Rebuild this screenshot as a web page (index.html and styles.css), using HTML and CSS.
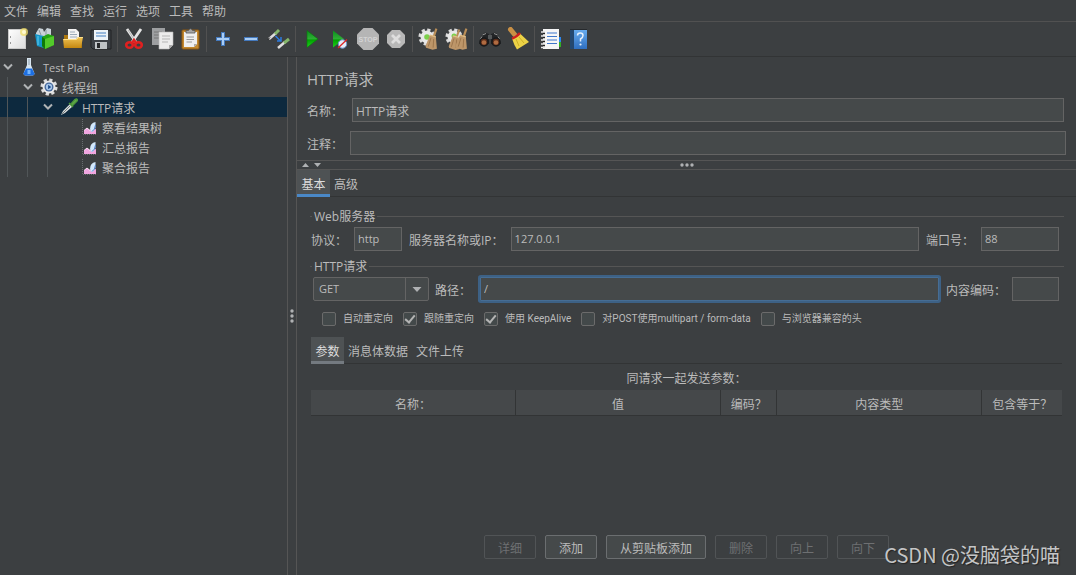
FILE: index.html
```html
<!DOCTYPE html>
<html lang="zh-CN">
<head>
<meta charset="utf-8">
<title>HTTP请求</title>
<link rel="stylesheet" href="styles.css">
</head>
<body>
<svg class="defs" aria-hidden="true">
  <defs>
    <linearGradient id="gGreen" x1="0" y1="0" x2="0" y2="1"><stop offset="0" stop-color="#0a8f1c"/><stop offset=".5" stop-color="#2fae35"/><stop offset=".55" stop-color="#00a000"/><stop offset="1" stop-color="#1fd11f"/></linearGradient>
    <linearGradient id="gGold" x1="0" y1="0" x2="0" y2="1"><stop offset="0" stop-color="#f0c456"/><stop offset="1" stop-color="#c48710"/></linearGradient>
    <linearGradient id="gPaper" x1="0" y1="0" x2="1" y2="1"><stop offset="0" stop-color="#ffffff"/><stop offset="1" stop-color="#dcdcdc"/></linearGradient>
    <linearGradient id="gBlue" x1="0" y1="0" x2="0" y2="1"><stop offset="0" stop-color="#6aaef0"/><stop offset="1" stop-color="#2f6fc0"/></linearGradient>
    <symbol id="gear" viewBox="0 0 20 20">
      <circle cx="10" cy="10" r="8" fill="none" stroke="#dcdcdc" stroke-width="3" stroke-dasharray="3.600 2.683"/>
      <circle cx="10" cy="10" r="7.200" fill="#e8e8e8"/>
    </symbol>
    <symbol id="broom" viewBox="0 0 12 20">
      <path d="M10.500 0.500L8 8" stroke="#b98e58" stroke-width="2"/>
      <path d="M4.500 6.500L10 8L11 19L7 20L1 18Q0 17 1 15Z" fill="#bd9669"/>
      <path d="M5.500 9L3 17M8 10L7.500 18" stroke="#936c44" stroke-width=".7"/>
      <path d="M4.500 6.500L10 8" stroke="#e0bd86" stroke-width="1.200"/>
    </symbol>
    <symbol id="chart" viewBox="0 0 16 16">
      <path d="M1.500 0V15.500H16" fill="none" stroke="#696d70" stroke-dasharray="1 1"/>
      <path d="M3 15V11.500L6 9L9 11L15 10V15Z" fill="#f0a6e0"/>
      <path d="M3 11.500L6 9L9 11.500" fill="none" stroke="#fbe3f7"/>
      <path d="M9 10Q9 4 14.500 3V9Q13 13 10 13Z" fill="#d3e8fb"/>
      <path d="M11 12.500Q14 11 14.500 6" fill="none" stroke="#4b7fd0"/>
    </symbol>
    <symbol id="chevron" viewBox="0 0 12 8"><path d="M2 1.500L6 5.500L10 1.500" fill="none" stroke="#b0b3b5" stroke-width="2"/></symbol>
  </defs>
</svg>

<div class="app">
  <nav class="menubar" aria-label="菜单">
    <button>文件</button><button>编辑</button><button>查找</button><button>运行</button><button>选项</button><button>工具</button><button>帮助</button>
  </nav>

  <div class="toolbar" role="toolbar">
    <button aria-label="新建"><svg viewBox="0 0 24 24"><rect x="3.500" y="2.500" width="17" height="19" fill="url(#gPaper)" stroke="#c9c9c9"/><path d="M5 10h1M5 16h1" stroke="#999" stroke-width="2"/><circle cx="19" cy="5" r="4" fill="#f2df6a" opacity=".75"/><circle cx="19" cy="5" r="2" fill="#fffad2"/></svg></button>
    <button aria-label="模板"><svg viewBox="0 0 24 24"><path d="M3 6L6 1L10 2L11 5L14 1L18 2V9L3 11Z" fill="#c9d2d8"/><path d="M6 3L8 8M13 3V9" stroke="#87959e"/><path d="M2 7L11 9V21L4 19Z" fill="#1596c9"/><path d="M5 9V18" stroke="#69cdf0"/><path d="M9 10L15 7L21 9V18L12 22L9 19Z" fill="#23a512"/><path d="M12 12L21 9V18L12 22Z" fill="#53ca2b"/><path d="M9 10L12 12V22L9 19Z" fill="#0e7a08"/></svg></button>
    <button aria-label="打开"><svg viewBox="0 0 24 24"><path d="M3 8H9L11 10H21V21H3Z" fill="#ad780f"/><path d="M7 2H15L18 5V14H7Z" fill="#f3f3f3"/><path d="M9 5H14M9 7.500H16M9 10H16" stroke="#9dabb8"/><path d="M2 12H15L17 10H22L20 21H3Z" fill="url(#gGold)"/><path d="M2.500 12.500H15.500L17.500 10.500H22" fill="none" stroke="#ffe08a"/></svg></button>
    <button aria-label="保存"><svg viewBox="0 0 24 24"><path d="M2 3H22V22H4L2 20Z" fill="#3c4045" stroke="#202225"/><rect x="5" y="3" width="14" height="10" fill="#edf3f8"/><path d="M7 6H17M7 9H17" stroke="#7ba5d2" stroke-width="1.500"/><rect x="6" y="15" width="12" height="7" fill="#bfc3c6"/><rect x="8" y="16" width="3" height="5" fill="#26282a"/></svg></button>
    <span class="sep"></span>
    <button aria-label="剪切"><svg viewBox="0 0 24 24"><path d="M5 2L14.500 16M19 2L9.500 16" stroke="#e4e4e4" stroke-width="2.800"/><path d="M6 3L13 14" stroke="#aaa" stroke-width=".8"/><g fill="none" stroke="#df2020" stroke-width="2.600"><ellipse cx="7.500" cy="18" rx="3.300" ry="2.800"/><ellipse cx="16.500" cy="18" rx="3.300" ry="2.800"/><path d="M10 16L12 13L14 16"/></g></svg></button>
    <button aria-label="复制"><svg viewBox="0 0 24 24"><path d="M2 1H15V18H2Z" fill="#9d9fa1"/><path d="M4 5H12M4 8H12M4 11H10" stroke="#777"/><path d="M9 5H23V18L19 22H9Z" fill="#ececec" stroke="#bbb" stroke-width=".6"/><path d="M12 9H20M12 12H20M12 15H18" stroke="#b5b5b5"/><path d="M23 18H19V22Z" fill="#aaa"/></svg></button>
    <button aria-label="粘贴"><svg viewBox="0 0 24 24"><rect x="4" y="3" width="17" height="19" rx="1" fill="#c4892f" stroke="#8c5913"/><path d="M6 5H19V17L16 20H6Z" fill="#efefef"/><path d="M8.500 10H16M8.500 12.500H16M8.500 15H14" stroke="#999"/><path d="M8 6V3.500H10.500Q12.500 0 14.500 3.500H17V6Z" fill="#a6a6a6" stroke="#555" stroke-width=".8"/><path d="M19 17H16V20Z" fill="#aaa"/></svg></button>
    <span class="sep"></span>
    <button aria-label="展开"><svg viewBox="0 0 24 24"><path d="M12 5V19M5 12H19" stroke="#4479bd" stroke-width="4"/><path d="M12 6V18M6 12H18" stroke="#a9cdf5" stroke-width="2"/></svg></button>
    <button aria-label="折叠"><svg viewBox="0 0 24 24"><path d="M5 12H19" stroke="#4479bd" stroke-width="4"/><path d="M6 12H18" stroke="#a9cdf5" stroke-width="2"/></svg></button>
    <button aria-label="切换"><svg viewBox="0 0 24 24"><path d="M2 12L9 6" stroke="#dedede" stroke-width="2.500"/><path d="M8 7L12 3" stroke="#84b66b" stroke-width="3"/><path d="M1 12.500L3 10.500" stroke="#222" stroke-width="1"/><path d="M11 21L18 15" stroke="#dedede" stroke-width="2.500"/><path d="M17 16L22 12" stroke="#84b66b" stroke-width="3"/><path d="M8.500 9L13 13.500M14 10V14H10" fill="none" stroke="#2c7be0" stroke-width="1.500"/></svg></button>
    <span class="sep"></span>
    <button aria-label="启动"><svg viewBox="0 0 24 24"><path d="M7 3.500L18 12L7 20.500Z" fill="url(#gGreen)" stroke="#067806" stroke-width=".6"/></svg></button>
    <button aria-label="不停顿开始"><svg viewBox="0 0 24 24"><path d="M5 3.500L16 12L5 20.500Z" fill="url(#gGreen)"/><circle cx="14.500" cy="17" r="4.200" fill="#e5edf8" stroke="#7095cc"/><path d="M10 21L19 12.500" stroke="#dd2525" stroke-width="1.300"/></svg></button>
    <button aria-label="停止" disabled><svg viewBox="0 0 24 24"><path d="M7.500 1H16.500L23 7.500V16.500L16.500 23H7.500L1 16.500V7.500Z" fill="#b5b5b5"/><text x="12" y="15" text-anchor="middle" class="stop-word">STOP</text></svg></button>
    <button aria-label="关闭" disabled><svg viewBox="0 0 24 24"><path d="M8 3H16L21 8V16L16 21H8L3 16V8Z" fill="#b8b8b8"/><path d="M8 8L16 16M16 8L8 16" stroke="#dedede" stroke-width="2.800"/></svg></button>
    <span class="sep"></span>
    <button aria-label="清除"><svg viewBox="0 0 24 24"><use href="#gear" x="1" y="1" width="18" height="18"/><circle cx="10" cy="10" r="2.800" fill="#7cd04c"/><use href="#broom" x="8" y="1" width="13" height="22"/></svg></button>
    <button aria-label="清除全部"><svg viewBox="0 0 24 24"><use href="#gear" x="0" y="1" width="18" height="18"/><circle cx="9" cy="9" r="2.500" fill="#7cd04c"/><use href="#broom" x="3" y="2" width="13" height="21"/><use href="#broom" x="10" y="1" width="13" height="22"/></svg></button>
    <span class="sep"></span>
    <button aria-label="查找"><svg viewBox="0 0 24 24"><path d="M4 8L7 5.500L11 7L11 17H1Z" fill="#222426"/><path d="M13 7L17 5.500L20 8L23 17H13Z" fill="#222426"/><path d="M4.500 8L8 6.500M16 6.500L19.500 8M2.500 12L4 9.500M20 9.500L21.500 12" stroke="#999"/><path d="M10 8H14V12H10Z" fill="#55585a"/><circle cx="6" cy="15" r="4" fill="#5c2e1b" stroke="#17191b" stroke-width="1.500"/><circle cx="18" cy="15" r="4" fill="#5c2e1b" stroke="#17191b" stroke-width="1.500"/><circle cx="6" cy="15.500" r="2.300" fill="#b06c42"/><circle cx="18" cy="15.500" r="2.300" fill="#b06c42"/></svg></button>
    <button aria-label="重置查找"><svg viewBox="0 0 24 24"><path d="M4.500 2.500L9 8" stroke="#c99045" stroke-width="5" stroke-linecap="round"/><path d="M6 11.500L14 6.500L23 15L11 22.500Q8 18 6 11.500Z" fill="#ecd246"/><path d="M10 12L13 19M13 10L18 16" stroke="#c4a41d" stroke-width=".8"/><path d="M6 11.500Q10 10.500 14 6" fill="none" stroke="#cc2020" stroke-width="2.600"/></svg></button>
    <span class="sep"></span>
    <button aria-label="函数助手"><svg viewBox="0 0 24 24"><rect x="19" y="10" width="3" height="5" fill="#2c87ef"/><rect x="19" y="15" width="3" height="5" fill="#33ae25"/><rect x="4" y="2" width="16" height="20" fill="#f6f6f6"/><path d="M8 6H18M8 9.500H18M8 13H18M8 16.500H18" stroke="#3f77cb" stroke-width="1.200"/><path d="M2 5H6M2 9H6M2 13H6M2 17H6M2 20.500H6" stroke="#e5e5e5" stroke-width="1.500"/><path d="M4 6.500H6M4 10.500H6M4 14.500H6M4 18.500H6" stroke="#222" stroke-width="1.300"/></svg></button>
    <button aria-label="帮助"><svg viewBox="0 0 24 24"><rect x="3" y="2" width="17" height="20" fill="url(#gBlue)"/><path d="M3 2H7V22H3Z" fill="#244870"/><path d="M3 2.500H20" stroke="#272a2d"/><path d="M10.500 8.500Q10.500 6 13.300 6Q16 6 16 8.500Q16 10.500 13.500 12V14.500" fill="none" stroke="#e6f0fb" stroke-width="1.500"/><circle cx="13.500" cy="17.500" r="1.100" fill="#e6f0fb"/></svg></button>
  </div>

  <div class="body">
    <aside class="tree" role="tree">
      <div class="node" role="treeitem"><span class="twist"><svg><use href="#chevron"/></svg></span><span class="pic"><svg viewBox="0 0 18 18"><path d="M7 0H11V7L14.500 15.500Q14.500 17.500 12.500 17.500H5.500Q3.500 17.500 3.500 15.500L7 7Z" fill="#d9e6f0"/><path d="M9 1V7" stroke="#8ea0ae"/><path d="M6 10.500H12L14.500 15.500Q14.500 17.500 12.500 17.500H5.500Q3.500 17.500 3.500 15.500Z" fill="#1d6fe2"/><path d="M9 12V16" stroke="#73b6ff" stroke-width="3"/></svg></span><span class="name latin">Test Plan</span></div>
      <div class="node" role="treeitem"><i class="guide"></i><span class="twist"><svg><use href="#chevron"/></svg></span><span class="pic"><svg viewBox="0 0 20 20"><use href="#gear" width="20" height="20"/><circle cx="10" cy="10" r="5" fill="#46699c"/><circle cx="10" cy="10" r="3.500" fill="#a9c8ea"/><path d="M9 7.500L12.500 10L9 12.500Z" fill="#1d4a8a"/></svg></span><span class="name">线程组</span></div>
      <div class="node selected" role="treeitem" aria-selected="true"><i class="guide"></i><i class="guide"></i><span class="twist"><svg><use href="#chevron"/></svg></span><span class="pic"><svg viewBox="0 0 18 18"><path d="M1 17L3 13L10 6L12.500 8.500L5 15Z" fill="#dadddc"/><path d="M2 16L10 8" stroke="#737c7e"/><path d="M9 5L13 9M11 6L15 1.500Q17 0 17.500 2.500L12 8Z" fill="#68b14e" stroke="#4c963a" stroke-width="1.500"/></svg></span><span class="name">HTTP请求</span></div>
      <div class="node" role="treeitem"><i class="guide"></i><i class="guide"></i><i class="guide"></i><span class="twist"></span><span class="pic leaf"><svg><use href="#chart"/></svg></span><span class="name">察看结果树</span></div>
      <div class="node" role="treeitem"><i class="guide"></i><i class="guide"></i><i class="guide"></i><span class="twist"></span><span class="pic leaf"><svg><use href="#chart"/></svg></span><span class="name">汇总报告</span></div>
      <div class="node" role="treeitem"><i class="guide"></i><i class="guide"></i><i class="guide"></i><span class="twist"></span><span class="pic leaf"><svg><use href="#chart"/></svg></span><span class="name">聚合报告</span></div>
    </aside>
    <div class="split-v"><svg class="grip-v" viewBox="0 0 4 14" fill="#afb1b3"><circle cx="2" cy="2" r="1.700"/><circle cx="2" cy="7" r="1.700"/><circle cx="2" cy="12" r="1.700"/></svg></div>

    <main class="panel">
      <section class="head">
        <h1>HTTP请求</h1>
        <div class="line name-line"><label for="nm">名称：</label><input id="nm" value="HTTP请求"></div>
        <div class="line note-line"><label for="cm">注释：</label><input id="cm"></div>
      </section>
      <div class="split-h">
        <svg class="arrows" viewBox="0 0 20 6" fill="#afb1b3"><path d="M0 5L3.500 1L7 5ZM12 1H19L15.500 5Z"/></svg>
        <svg class="grip-h" viewBox="0 0 14 4" fill="#afb1b3"><circle cx="2" cy="2" r="1.700"/><circle cx="7" cy="2" r="1.700"/><circle cx="12" cy="2" r="1.700"/></svg>
      </div>
      <div class="tabs" role="tablist"><button class="on" role="tab" aria-selected="true">基本</button><button role="tab">高级</button></div>

      <div class="content">
        <fieldset>
          <legend>Web服务器</legend>
          <div class="row">
            <label for="proto">协议：</label><input id="proto" class="w-proto latin" value="http">
            <label for="host">服务器名称或IP：</label><input id="host" class="grow latin" value="127.0.0.1">
            <label for="port">端口号：</label><input id="port" class="w-port latin" value="88">
          </div>
        </fieldset>
        <fieldset>
          <legend>HTTP请求</legend>
          <div class="row request">
            <span class="combo"><select class="latin" aria-label="方法"><option>GET</option><option>POST</option></select><svg viewBox="0 0 24 24"><path d="M.5 0V24" stroke="#646464"/><path d="M7.500 10H16.500L12 15Z" fill="#afb1b3"/></svg></span>
            <label for="path">路径：</label><input id="path" class="grow focused latin" value="/">
            <label for="enc">内容编码：</label><input id="enc" class="w-enc">
          </div>
          <div class="checks">
            <label><input type="checkbox">自动重定向</label>
            <label><input type="checkbox" checked>跟随重定向</label>
            <label><input type="checkbox" checked>使用 KeepAlive</label>
            <label><input type="checkbox">对POST使用multipart / form-data</label>
            <label><input type="checkbox">与浏览器兼容的头</label>
          </div>
        </fieldset>

        <div class="params">
          <div class="tabs inner" role="tablist"><button class="on" role="tab" aria-selected="true">参数</button><button role="tab">消息体数据</button><button role="tab">文件上传</button></div>
          <table>
            <caption>同请求一起发送参数：</caption>
            <thead><tr><th class="c-wide">名称：</th><th class="c-wide">值</th><th class="c-code">编码？</th><th class="c-wide">内容类型</th><th>包含等于？</th></tr></thead>
          </table>
        </div>
      </div>

      <div class="actions">
        <button disabled>详细</button><button>添加</button><button>从剪贴板添加</button><button disabled>删除</button><button disabled>向上</button><button disabled>向下</button>
      </div>
    </main>
  </div>
  <div class="watermark">CSDN @没脑袋的喵</div>
</div>
</body>
</html>
```

FILE: styles.css
```css
* { box-sizing: border-box; }

body {
  margin: 0;
  background: #3c3f41;
  color: #bbbbbb;
  font: 12px/20px "Open Sans", "Noto Sans CJK SC", sans-serif;
}

button, input, select { font: inherit; color: inherit; }
button { background: none; border: 0; padding: 0; }
.latin { font-size: 11px; }
.defs { position: absolute; width: 0; height: 0; }

.app {
  position: relative;
  display: flex;
  flex-direction: column;
  min-height: 100vh;
}

.menubar {
  display: flex;
  gap: 9px;
  padding: 3px 4px 0;
  line-height: 18px;
  border-bottom: 1px solid #515151;
}

.toolbar {
  display: flex;
  align-items: center;
  padding: 3px;
  border-bottom: 1px solid #323435;
}
.toolbar button { display: flex; justify-content: center; width: 28px; height: 28px; align-items: center; }
.toolbar svg { width: 24px; height: 24px; }
.sep { width: 1px; height: 26px; margin: 0 2px; background: #515151; }
.stop-word { font-family: "Liberation Sans", sans-serif; font-size: 7px; font-weight: bold; fill: #d4d4d4; }

.body { flex: 1; display: flex; }

.tree { width: 287px; flex: none; }
.node { display: flex; align-items: center; height: 20px; white-space: nowrap; }
.selected { background: #0d293e; }
.guide { width: 13px; height: 20px; margin-left: 7px; border-left: 1px solid #515658; }
.twist { width: 20px; display: flex; padding-left: 2px; }
.twist svg { width: 12px; height: 8px; }
.pic { width: 18px; display: flex; justify-content: center; }
.pic svg { width: 18px; height: 18px; }
.leaf svg { width: 16px; height: 16px; }
.name { padding: 3px 0 0 4px; }
.name.latin { padding: 1px 0 0 5px; }

.split-v {
  flex: none;
  width: 10px;
  display: flex;
  align-items: center;
  justify-content: center;
  border: solid #555555;
  border-width: 0 1px;
}
.grip-v { width: 4px; height: 14px; }

.panel { flex: 1; min-width: 0; display: flex; flex-direction: column; }
.head { padding: 12px 10px 5px; display: flex; flex-direction: column; gap: 9px; }
h1 { margin: 0; font-size: 15px; font-weight: 400; line-height: 20px; }
.line { display: flex; align-items: center; }
.line input { flex: 1; min-width: 0; padding-top: 2px; }
.line label, .row label { padding-top: 4px; }
.name-line { padding-right: 2px; }
.name-line label { width: 45px; }
.note-line label { width: 43px; }

input, select {
  height: 24px;
  margin: 0;
  padding: 0 3px;
  background: #45494a;
  border: 1px solid #646464;
  border-radius: 0;
  outline: 0;
}
input.latin { padding-bottom: 2px; }

.split-h {
  display: grid;
  grid-template-columns: 1fr auto 1fr;
  align-items: center;
  height: 10px;
  padding: 0 5px;
  border: solid #555555;
  border-width: 1px 0;
}
.arrows { width: 20px; height: 6px; }
.grip-h { width: 14px; height: 4px; }

.tabs { display: flex; box-shadow: inset 0 -1px #323435; }
.tabs button { height: 27px; padding: 6px 4px 0; line-height: 18px; border-bottom: 3px solid transparent; white-space: nowrap; }
.tabs .on { width: 33px; background: #4e5254; border-color: #4a88c7; color: #dddddd; }
.tabs.inner .on { border-color: #747a80; }

.content { padding: 9px 12px 0 13px; }
fieldset { margin: 0; padding: 1px 5px 5px 1px; border: 0; border-top: 1px solid #555555; min-width: 0; }
legend { margin-left: 1px; padding: 2px 2px 0; line-height: 18px; }
.row { display: flex; align-items: center; gap: 7px; height: 24px; white-space: nowrap; }
.request { padding-left: 2px; gap: 6px; }
.grow { flex: 1; min-width: 0; }
.w-proto { width: 48px; }
.w-port { width: 78px; }
.w-enc { width: 47px; }
.focused { margin: 0 1px 0 3px; border-color: #466d94; box-shadow: 0 0 0 2px #3d6185; border-radius: 1px; }

.combo { display: grid; width: 116px; }
.combo select { grid-area: 1 / 1; width: 100%; appearance: none; border-radius: 2px; padding-left: 5px; }
.combo svg { grid-area: 1 / 1; justify-self: end; width: 24px; height: 24px; pointer-events: none; }

.checks {
  display: flex;
  gap: 10px;
  padding: 11px 0 0 11px;
  font: 10px/14px Roboto, "Noto Sans CJK SC", sans-serif;
  white-space: nowrap;
}
.checks label { display: flex; align-items: center; gap: 7px; }
.checks input {
  appearance: none;
  display: grid;
  place-items: center;
  width: 14px;
  height: 14px;
  padding: 0;
  border-radius: 2px;
  background: #43494a;
  border-color: #6b6b6b;
}
.checks input:checked::before {
  content: "";
  width: 4px;
  height: 8px;
  margin-bottom: 2px;
  border: solid #b4b4b4;
  border-width: 0 2px 2px 0;
  transform: rotate(40deg);
}

.params { padding: 6px 2px 0 1px; }
table { width: 100%; table-layout: fixed; border-collapse: separate; border-spacing: 0; }
caption { padding: 5px 0 1px; }
th {
  height: 26px;
  padding: 4px 0 0;
  font-weight: 400;
  background: #45484a;
  border-right: 1px solid #323435;
  border-bottom: 1px solid #323435;
}
th:last-child { border-right: 0; }
.c-wide { width: 27.3%; }
.c-code { width: 7.5%; }

.actions { display: flex; justify-content: center; gap: 9px; margin-top: auto; padding: 0 10px 16px; }
.actions button {
  height: 24px;
  padding: 4px 13px 0;
  line-height: 18px;
  border: 1px solid #6b6e70;
  border-radius: 2px;
  background: #45494a;
  white-space: nowrap;
}
.actions button:disabled { color: #6e7072; border-color: #515456; background: none; }

.watermark {
  position: absolute;
  right: 16px;
  bottom: 8px;
  font: 20px/24px "Noto Sans CJK SC", sans-serif;
  color: #c4c5c6;
  text-shadow: 1px 1px 1px #222222;
}
```
